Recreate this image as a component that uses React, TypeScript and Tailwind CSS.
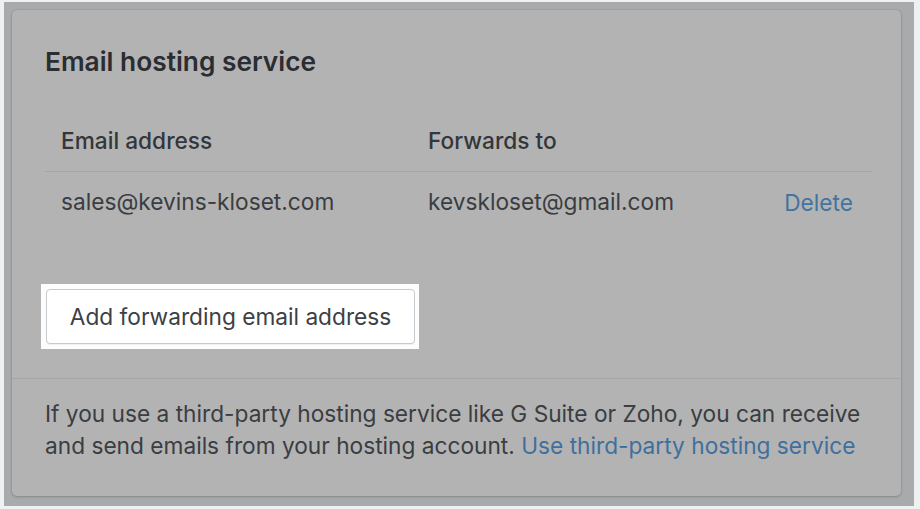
export default function App() {
  return (
    <div
      className="w-[920px] h-[509px] bg-[#eef0f1] pl-[4px] pt-[2px] pr-[6px] pb-[3px]"
      style={{ fontFamily: "Inter, 'Liberation Sans', sans-serif" }}
    >
      <div className="h-full bg-[#a9aaab] pl-[8px] pr-[13px] pt-[8px] pb-[10px]">
        <div className="h-full rounded-[5px] bg-[#b3b3b3] shadow-[0_0_0_1px_rgba(0,0,0,0.04),0_1px_3px_rgba(0,0,0,0.18)] flex flex-col">
          {/* top section */}
          <div className="pl-[33px] pr-[29px] pt-[36px]">
            <h2 className="text-[26.3px] leading-[32px] font-semibold text-[#2a2d31]">Email hosting service</h2>

            <div className="mt-[49px]">
              <div className="grid grid-cols-[367px_1fr_auto] border-b border-[#a6a6a6] pb-[16px]">
                <div className="pl-[16px] text-[22.7px] leading-[28px] font-medium text-[#33363a]">Email address</div>
                <div className="pl-[16px] text-[22.7px] leading-[28px] font-medium text-[#33363a]">Forwards to</div>
                <div />
              </div>
              <div className="grid grid-cols-[367px_1fr_auto] pt-[16px] text-[22.7px] leading-[28px] text-[#3a3d41]">
                <div className="pl-[16px]">sales@kevins-kloset.com</div>
                <div className="pl-[16px]">kevskloset@gmail.com</div>
                <div className="pr-[19px] pt-[1px] text-[#43739f]">Delete</div>
              </div>
            </div>

            <div className="mt-[67px] -ml-[4px] w-[378px] h-[65px] bg-[#fdfdfd] p-[5px]">
              <button className="w-[369px] h-[55px] rounded-[4px] border border-[#c6cbd0] bg-white shadow-[0_1px_0_rgba(22,29,37,0.05)] text-[22.7px] leading-[28px] text-[#3d4044]">
                Add forwarding email address
              </button>
            </div>
          </div>

          {/* footer section */}
          <div className="mt-[29px] border-t border-[#a6a6a6] pl-[33px] pr-[29px] pt-[19px]">
            <p className="text-[22.7px] leading-[32px] text-[#3a3d41]">
              If you use a third-party hosting service like G Suite or Zoho, you can receive and send emails from
              your hosting account. <span className="text-[#3f6f9d]">Use third-party hosting service</span>
            </p>
          </div>
        </div>
      </div>
    </div>
  );
}
